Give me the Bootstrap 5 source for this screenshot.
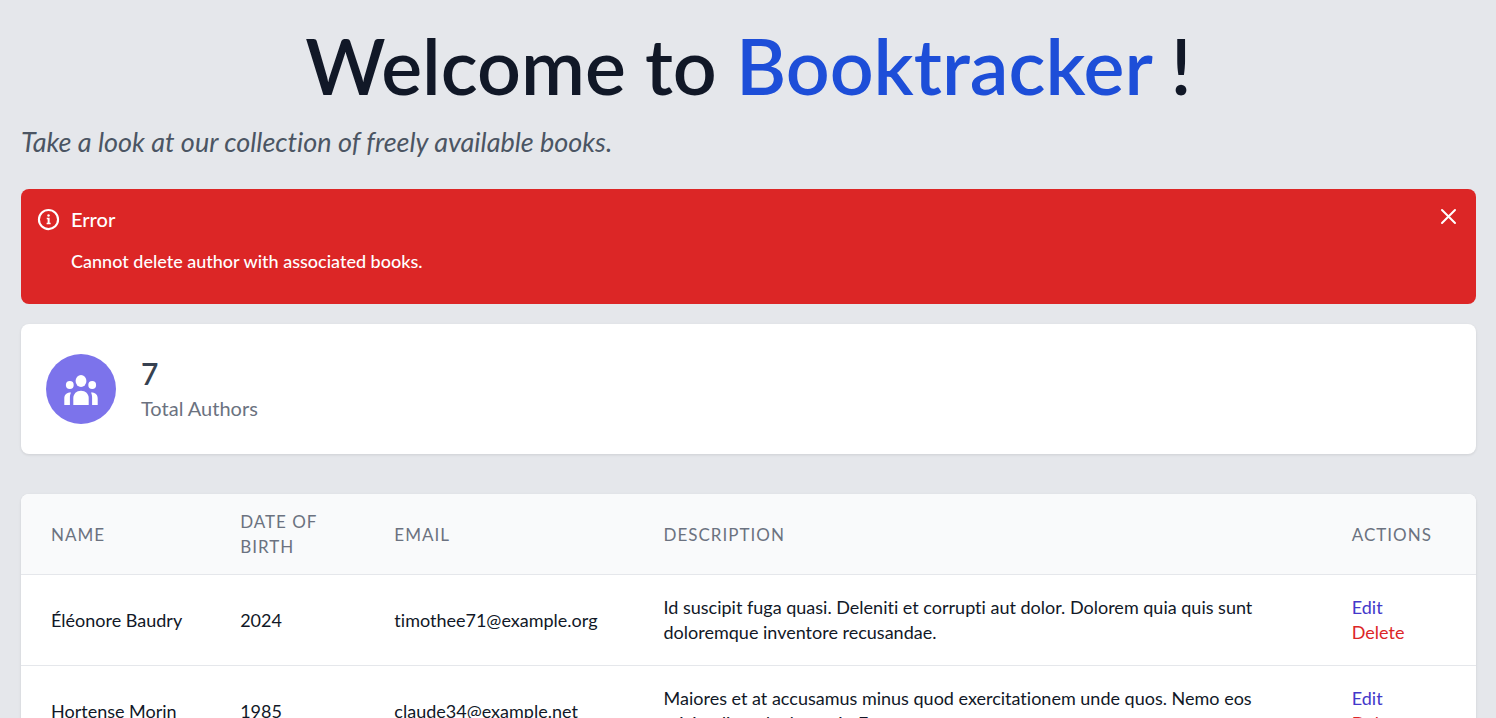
<!DOCTYPE html>
<html lang="en">
<head>
<meta charset="utf-8">
<meta name="viewport" content="width=device-width, initial-scale=1">
<title>Booktracker</title>
<link rel="stylesheet" href="https://cdn.jsdelivr.net/npm/bootstrap@5.3.0/dist/css/bootstrap.min.css">
<style>
  body { background: #e5e7eb; color: #111827; font-family: Lato, "Open Sans", sans-serif; font-size: 18px; line-height: 25px; font-variant-ligatures: none; }
  .page { padding: 20px 20px 20px 21px; }
  .hero-title { font-size: 77px; line-height: 90px; font-weight: 600; margin: 0; color: #111827; }
  .hero-title span { color: #1d4ed8; }
  .tagline { font-size: 27px; line-height: 35px; color: #4b5563; margin: 14px 0 30px; }
  .notice { background: #dc2626; color: #fff; border: 0; border-radius: 8px; padding: 15px; margin: 0 0 20px; gap: 10px; }
  .notice h2 { font-size: 20px; line-height: 30px; font-weight: 500; margin: 0; }
  .notice p { margin: 15px 0; font-weight: 500; }
  .notice-icon { margin-top: 3px; }
  .notice button { line-height: 0; color: #fff; background: none; border: 0; padding: 0; width: 25px; height: 25px; }
  .panel { background: #fff; border-radius: 8px; box-shadow: 0 1px 3px rgba(0,0,0,.1); }
  .stat { padding: 30px 25px; margin-bottom: 40px; gap: 25px; }
  .stat-icon { width: 70px; height: 70px; background: #7c73eb; }
  .stat-value { font-size: 30px; line-height: 38px; font-weight: 600; color: #374151; }
  .stat-label { font-size: 20px; line-height: 32px; color: #6b7280; }
  .authors { width: 100%; table-layout: fixed; }
  .authors th, .authors td { padding: 20px 20px 20px 30px; vertical-align: middle; }
  .authors th { background: #f9fafb; color: #6b7280; font-size: 17px; font-weight: 400; letter-spacing: 1px; text-transform: uppercase; padding: 15px 30px; }
  .authors td:nth-child(4) { padding-right: 65px; }
  .authors tr { border-bottom: 1px solid #e5e7eb; }
  .authors a { display: block; text-decoration: none; color: #4338ca; }
  .authors a.remove { color: #dc2626; }
</style>
</head>
<body>
<main class="page">
  <h1 class="hero-title text-center">Welcome to <span>Booktracker</span> !</h1>
  <p class="tagline fst-italic">Take a look at our collection of freely available books.</p>

  <div class="notice alert d-flex align-items-start" role="alert">
    <svg class="notice-icon flex-shrink-0" width="25" height="25" viewBox="0 0 20 20" fill="#fff" aria-hidden="true"><path d="M10 1.500A8.500 8.500 0 1 0 10 18.500A8.500 8.500 0 0 0 10 1.500ZM10 16.800A6.800 6.800 0 1 1 10 3.200A6.800 6.800 0 0 1 10 16.800Z"/><circle cx="10" cy="6.700" r="1"/><path d="M8.600 8.500h2.300v4h.8v1.200H8.500v-1.200h.8v-2.800h-.7z"/></svg>
    <div class="flex-grow-1">
      <h2>Error</h2>
      <p>Cannot delete author with associated books.</p>
    </div>
    <button type="button" data-bs-dismiss="alert" aria-label="Close"><svg width="25" height="25" viewBox="0 0 25 25" fill="none" stroke="#fff" stroke-width="2" stroke-linecap="round"><path d="M6 6l13 13M19 6L6 19"/></svg></button>
  </div>

  <section class="panel stat d-flex align-items-center">
    <div class="stat-icon rounded-circle d-flex align-items-center justify-content-center">
      <svg width="40" height="40" viewBox="0 0 40 40" fill="#fff" aria-hidden="true">
        <ellipse cx="20" cy="12" rx="5.400" ry="6"/>
        <ellipse cx="8.800" cy="16" rx="3.900" ry="4"/>
        <ellipse cx="31.200" cy="16" rx="3.900" ry="4"/>
        <path d="M12.300 36v-7c0-4 3.200-7.200 7.700-7.200s7.700 3.200 7.700 7.200v7z"/>
        <path d="M3.300 36v-6.400c0-3.800 2.300-6.300 6.700-6.100-.8 1.600-1.100 3.300-1.100 5.200V36z"/>
        <path d="M36.700 36v-6.400c0-3.800-2.300-6.300-6.700-6.100.8 1.600 1.100 3.300 1.100 5.200V36z"/>
      </svg>
    </div>
    <div>
      <div class="stat-value">7</div>
      <div class="stat-label">Total Authors</div>
    </div>
  </section>

  <div class="panel overflow-hidden">
    <table class="authors">
      <colgroup><col style="width:13%"><col style="width:10.600%"><col style="width:18.500%"><col style="width:47.300%"><col style="width:10.600%"></colgroup>
      <thead><tr><th>Name</th><th>Date of birth</th><th>Email</th><th>Description</th><th>Actions</th></tr></thead>
      <tbody>
        <tr><td>Éléonore Baudry</td><td>2024</td><td>timothee71@example.org</td><td>Id suscipit fuga quasi. Deleniti et corrupti aut dolor. Dolorem quia quis sunt doloremque inventore recusandae.</td><td><a href="#">Edit</a><a href="#" class="remove">Delete</a></td></tr>
        <tr><td>Hortense Morin</td><td>1985</td><td>claude34@example.net</td><td>Maiores et at accusamus minus quod exercitationem unde quos. Nemo eos reiciendis sed ad eos sit. Et</td><td><a href="#">Edit</a><a href="#" class="remove">Delete</a></td></tr>
      </tbody>
    </table>
  </div>
</main>
<script src="https://cdn.jsdelivr.net/npm/bootstrap@5.3.0/dist/js/bootstrap.bundle.min.js"></script>
</body>
</html>
